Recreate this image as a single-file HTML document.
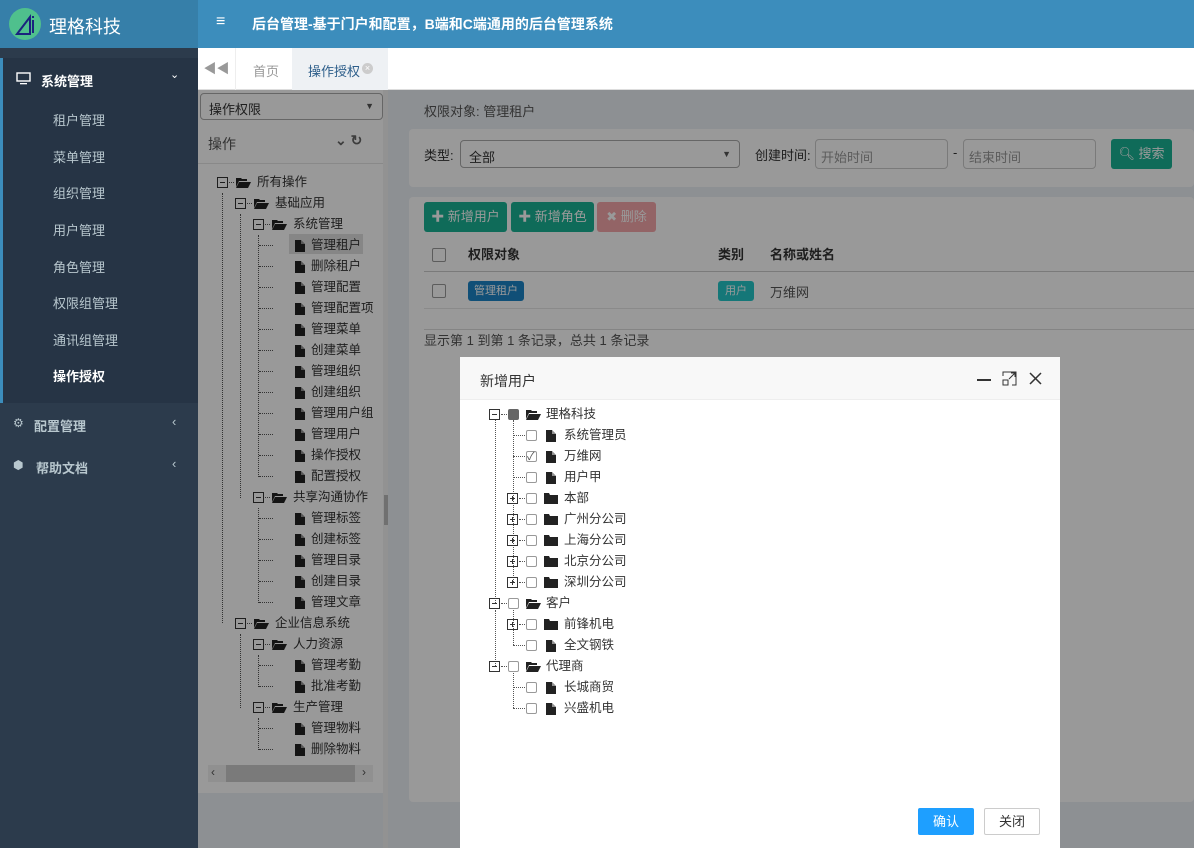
<!DOCTYPE html>
<html><head><meta charset="utf-8"><style>
*{box-sizing:border-box;margin:0;padding:0}
body{width:1194px;height:848px;overflow:hidden;position:relative;font-family:"Liberation Sans","Noto Sans CJK SC",sans-serif;font-size:13px;color:#333;background:#ecf0f5}
.abs{position:absolute}
#logo{left:0;top:0;width:198px;height:48px;background:#367fa9;color:#fff}
#top{left:198px;top:0;width:996px;height:48px;background:#3c8dbc;color:#fff;font-weight:bold;font-size:14px}
#side{left:0;top:48px;width:198px;height:800px;background:#2c3b4c;color:#b8c7ce}
.sub{color:#b8c7ce;font-size:13px;position:absolute;left:53px}
#tabs{left:198px;top:48px;width:996px;height:42px;background:#fff;border-bottom:1px solid #ddd}
.tr{position:absolute;font-size:12.5px;color:#333;white-space:nowrap;height:21px;line-height:21px}
.fold{display:inline-block;border:1px solid #333;position:absolute;width:11px;height:11px;top:5px}
.fold:after{content:"";position:absolute;left:2px;top:4px;width:5px;height:1px;background:#333}
.plus:before{content:"";position:absolute;left:4px;top:2px;width:1px;height:5px;background:#333}
.vl{position:absolute;border-left:1px dotted #555;width:0}
.hl{position:absolute;border-top:1px dotted #555;height:0}
.cb{position:absolute;width:11px;height:11px;border:1px solid #999;border-radius:2px;top:5px;background:#fff}
.btn{position:absolute;color:#fff;font-size:13px;text-align:center;border-radius:3px}
</style></head><body>
<div id="logo" class="abs">
 <svg class="abs" style="left:6px;top:5px" width="36" height="36" viewBox="0 0 36 36"><circle cx="19" cy="19" r="16" fill="#4fc08d"/><path d="M11 29 L24 12 L24 29 Z" fill="none" stroke="#1a237e" stroke-width="2"/><rect x="26" y="15" width="2" height="13" fill="#1a237e"/><rect x="26" y="11" width="2" height="2" fill="#1a237e"/></svg>
 <div class="abs" style="left:49px;top:13px;font-size:18px">理格科技</div>
</div>
<div id="top" class="abs">
 <div class="abs" style="left:18px;top:13px;font-size:16px">≡</div>
 <div class="abs" style="left:54px;top:14px">后台管理-基于门户和配置，B端和C端通用的后台管理系统</div>
</div>
<div id="side" class="abs">
 <div class="abs" style="left:0;top:10px;width:198px;height:345px;background:#263445;border-left:3px solid #3c8dbc"></div>
 <svg class="abs" style="left:16px;top:24px" width="15" height="13" viewBox="0 0 15 13"><rect x="1" y="1" width="13" height="8" fill="none" stroke="#fff" stroke-width="1.4"/><rect x="4" y="11" width="7" height="1.3" fill="#fff"/></svg>
 <div class="abs" style="left:41px;top:23px;color:#fff;font-weight:bold">系统管理</div>
 <div class="abs" style="left:170px;top:20px;color:#fff;font-size:11px">⌄</div>
 <div class="sub" style="top:62px">租户管理</div>
 <div class="sub" style="top:99px">菜单管理</div>
 <div class="sub" style="top:135px">组织管理</div>
 <div class="sub" style="top:172px">用户管理</div>
 <div class="sub" style="top:209px">角色管理</div>
 <div class="sub" style="top:245px">权限组管理</div>
 <div class="sub" style="top:282px">通讯组管理</div>
 <div class="sub" style="top:318px;color:#fff;font-weight:bold">操作授权</div>
 <div class="abs" style="left:13px;top:368px;font-size:12px">⚙</div>
 <div class="abs" style="left:34px;top:368px;font-weight:bold">配置管理</div>
 <div class="abs" style="left:172px;top:366px">‹</div>
 <div class="abs" style="left:13px;top:410px;font-size:12px">⬢</div>
 <div class="abs" style="left:36px;top:410px;font-weight:bold">帮助文档</div>
 <div class="abs" style="left:172px;top:408px">‹</div>
</div>
<div id="tabs" class="abs">
 <div class="abs" style="left:0;top:0;width:38px;height:42px;border-right:1px solid #eee;color:#999;text-align:center;line-height:42px;font-size:13px">◀◀</div>
 <div class="abs" style="left:55px;top:13px;color:#999">首页</div>
 <div class="abs" style="left:94px;top:0;width:96px;height:42px;background:#eef1f4"></div>
 <div class="abs" style="left:110px;top:13px;color:#2d5e8a">操作授权</div>
 <div class="abs" style="left:164px;top:15px;width:11px;height:11px;border-radius:50%;background:#ccc;color:#fff;font-size:9px;line-height:11px;text-align:center">×</div>
</div>
<div class="abs" style="left:198px;top:90px;width:185px;height:703px;background:#fff"></div>
<div class="abs" style="left:383px;top:90px;width:5px;height:758px;background:#f4f4f4"></div>
<div class="abs" style="left:384px;top:495px;width:4px;height:30px;background:#bbb"></div>
<div class="abs" style="left:200px;top:93px;width:183px;height:27px;border:1px solid #aaa;border-radius:4px;background:#fff;padding:5px 8px">操作权限<span style="float:right;font-size:9px;color:#555;margin-top:2px">▼</span></div>
<div class="abs" style="left:208px;top:134px;font-size:14px;color:#555">操作</div>
<div class="abs" style="left:335px;top:132px;color:#666;font-size:14px;font-weight:bold">⌄ ↻</div>
<div class="abs" style="left:198px;top:163px;width:185px;height:1px;background:#e5e5e5"></div>
<div class="abs" style="left:208px;top:765px;width:165px;height:17px;background:#f0f0f0"></div>
<div class="abs" style="left:226px;top:765px;width:129px;height:17px;background:#ccc"></div>
<div class="abs" style="left:211px;top:765px;font-size:12px;color:#555">‹</div>
<div class="abs" style="left:362px;top:765px;font-size:12px;color:#555">›</div>
<div id="lt"></div>
<div class="abs" style="left:424px;top:101px;color:#555">权限对象: 管理租户</div>
<div class="abs" style="left:409px;top:129px;width:785px;height:58px;background:#fff;border-radius:4px"></div>
<div class="abs" style="left:424px;top:145px">类型:</div>
<div class="abs" style="left:460px;top:140px;width:280px;height:28px;border:1px solid #aaa;border-radius:4px;background:#fff;padding:6px 8px">全部<span style="float:right;font-size:9px;color:#555;margin-top:2px">▼</span></div>
<div class="abs" style="left:755px;top:145px">创建时间:</div>
<div class="abs" style="left:815px;top:139px;width:133px;height:30px;border:1px solid #ccc;border-radius:4px;background:#fff;padding:7px 5px;color:#999">开始时间</div>
<div class="abs" style="left:953px;top:145px">-</div>
<div class="abs" style="left:963px;top:139px;width:133px;height:30px;border:1px solid #ccc;border-radius:4px;background:#fff;padding:7px 5px;color:#999">结束时间</div>
<div class="btn" style="left:1111px;top:139px;width:61px;height:30px;line-height:30px;background:#1ab394">🔍︎ 搜索</div>
<div class="abs" style="left:409px;top:197px;width:785px;height:605px;background:#fff;border-radius:4px"></div>
<div class="btn" style="left:424px;top:202px;width:83px;height:30px;line-height:30px;background:#1ab394">✚ 新增用户</div>
<div class="btn" style="left:511px;top:202px;width:83px;height:30px;line-height:30px;background:#1ab394">✚ 新增角色</div>
<div class="btn" style="left:597px;top:202px;width:59px;height:30px;line-height:30px;background:#f5a7aa">✖ 删除</div>
<div class="abs" style="left:432px;top:248px;width:14px;height:14px;border:1px solid #999;border-radius:2px;background:#fff"></div>
<div class="abs" style="left:468px;top:244px;font-weight:bold">权限对象</div>
<div class="abs" style="left:718px;top:244px;font-weight:bold">类别</div>
<div class="abs" style="left:770px;top:244px;font-weight:bold">名称或姓名</div>
<div class="abs" style="left:424px;top:271px;width:770px;height:1px;background:#ccc"></div>
<div class="abs" style="left:432px;top:284px;width:14px;height:14px;border:1px solid #999;border-radius:2px;background:#fff"></div>
<div class="btn" style="left:468px;top:281px;width:56px;height:20px;line-height:20px;font-size:11px;background:#1c84c6">管理租户</div>
<div class="btn" style="left:718px;top:281px;width:36px;height:20px;line-height:20px;font-size:11px;background:#23c6c8">用户</div>
<div class="abs" style="left:770px;top:282px;color:#555">万维网</div>
<div class="abs" style="left:424px;top:308px;width:770px;height:1px;background:#e7e7e7"></div>
<div class="abs" style="left:424px;top:329px;width:770px;height:1px;background:#ddd"></div>
<div class="abs" style="left:424px;top:330px;color:#555">显示第 1 到第 1 条记录，总共 1 条记录</div>
<div class="abs" style="left:198px;top:90px;width:996px;height:758px;background:rgba(0,0,0,0.4)"></div>
<div class="abs" style="left:460px;top:357px;width:600px;height:491px;background:#fff"></div>
<div class="abs" style="left:460px;top:357px;width:600px;height:43px;background:#f8f8f8;border-bottom:1px solid #eee"></div>
<div class="abs" style="left:480px;top:371px;font-size:14px">新增用户</div>
<div class="abs" style="left:977px;top:379px;width:14px;height:2px;background:#333"></div>
<svg class="abs" style="left:1002px;top:371px" width="15" height="15" viewBox="0 0 15 15" fill="none" stroke="#333"><path d="M1 5V1h13v13h-4M1 9h5v5H1z M7 8l6-6M9 2h4v4"/></svg>
<svg class="abs" style="left:1029px;top:372px" width="13" height="13" viewBox="0 0 13 13" stroke="#333" stroke-width="1.5"><path d="M1 1l11 11M12 1L1 12"/></svg>
<div id="dt"></div>
<div class="btn" style="left:918px;top:808px;width:56px;height:27px;line-height:27px;background:#1e9fff;border-radius:2px">确认</div>
<div class="abs" style="left:984px;top:808px;width:56px;height:27px;line-height:25px;border:1px solid #ccc;border-radius:2px;text-align:center">关闭</div>
<script>
function fileIcon(x,y){return `<svg class="abs" style="left:${x}px;top:${y}px" width="10" height="12" viewBox="0 0 10 12"><path d="M0 0h6l4 4v8H0z" fill="#222"/><path d="M6 0v4h4" fill="#fff" opacity=".5"/></svg>`}
function openF(x,y){return `<svg class="abs" style="left:${x}px;top:${y}px" width="15" height="11" viewBox="0 0 15 11"><path d="M0 1h5l1 1h5v2H3L0 10z M3 5h12l-3 6H0z" fill="#222"/></svg>`}
function closedF(x,y){return `<svg class="abs" style="left:${x}px;top:${y}px" width="14" height="11" viewBox="0 0 14 11"><path d="M0 0h5l1 2h8v9H0z" fill="#222"/></svg>`}
var L=[[0,'o','所有操作'],[1,'o','基础应用'],[2,'o','系统管理'],[3,'f','管理租户'],[3,'f','删除租户'],[3,'f','管理配置'],[3,'f','管理配置项'],[3,'f','管理菜单'],[3,'f','创建菜单'],[3,'f','管理组织'],[3,'f','创建组织'],[3,'f','管理用户组'],[3,'f','管理用户'],[3,'f','操作授权'],[3,'f','配置授权'],[2,'o','共享沟通协作'],[3,'f','管理标签'],[3,'f','创建标签'],[3,'f','管理目录'],[3,'f','创建目录'],[3,'f','管理文章'],[1,'o','企业信息系统'],[2,'o','人力资源'],[3,'f','管理考勤'],[3,'f','批准考勤'],[2,'o','生产管理'],[3,'f','管理物料'],[3,'f','删除物料']];
var h='';
h+=`<div class="vl" style="left:222px;top:193px;height:430px"></div>`;
h+=`<div class="vl" style="left:240px;top:214px;height:284px"></div><div class="vl" style="left:240px;top:634px;height:74px"></div>`;
h+=`<div class="vl" style="left:258px;top:235px;height:242px"></div><div class="vl" style="left:258px;top:508px;height:95px"></div><div class="vl" style="left:258px;top:655px;height:32px"></div><div class="vl" style="left:258px;top:718px;height:32px"></div>`;
h+=`<div class="abs" style="left:289px;top:234px;width:74px;height:20px;background:#e0e0e0"></div>`;
L.forEach((r,i)=>{var y=172+i*21,x=217+r[0]*18;
 if(r[1]=='o'){h+=`<div class="tr" style="left:${x}px;top:${y}px"><span class="fold"></span></div><div class="hl" style="left:${x+12}px;top:${y+10}px;width:5px"></div>`+openF(x+19,y+5)+`<div class="tr" style="left:${x+40}px;top:${y}px">${r[2]}</div>`}
 else{h+=`<div class="hl" style="left:${x-12}px;top:${y+10}px;width:14px"></div>`+fileIcon(x+24,y+5)+`<div class="tr" style="left:${x+40}px;top:${y}px">${r[2]}</div>`}
});
document.getElementById('lt').innerHTML=h;
var D=[[0,'o','理格科技','g'],[1,'f','系统管理员'],[1,'f','万维网','c'],[1,'f','用户甲'],[1,'p','本部'],[1,'p','广州分公司'],[1,'p','上海分公司'],[1,'p','北京分公司'],[1,'p','深圳分公司'],[0,'o','客户'],[1,'p','前锋机电'],[1,'f','全文钢铁'],[0,'o','代理商'],[1,'f','长城商贸'],[1,'f','兴盛机电']];
h=`<div class="vl" style="left:495px;top:420px;height:183px"></div><div class="vl" style="left:495px;top:610px;height:56px"></div><div class="vl" style="left:513px;top:420px;height:162px"></div><div class="vl" style="left:513px;top:610px;height:35px"></div><div class="vl" style="left:513px;top:673px;height:35px"></div>`;
D.forEach((r,i)=>{var y=404+i*21,x=489+r[0]*18;
 var cbx=x+19;
 if(r[1]=='o'||r[1]=='p'){h+=`<div class="tr" style="left:${x}px;top:${y}px"><span class="fold ${r[1]=='p'?'plus':''}"></span></div><div class="hl" style="left:${x+12}px;top:${y+10}px;width:6px"></div>`}
 else{h+=`<div class="hl" style="left:${x+6}px;top:${y+10}px;width:12px"></div>`}
 var st=r[3]=='g'?'background:#666;border-color:#666':'';
 h+=`<div class="cb" style="left:${cbx}px;top:${y+5}px;${st}">${r[3]=='c'?'<span style="position:absolute;left:0;top:-4px;font-size:11px;color:#555">✓</span>':''}</div>`;
 if(r[1]=='o')h+=openF(cbx+18,y+5);else if(r[1]=='p')h+=closedF(cbx+18,y+5);else h+=fileIcon(cbx+20,y+5);
 h+=`<div class="tr" style="left:${cbx+38}px;top:${y}px">${r[2]}</div>`;
});
document.getElementById('dt').innerHTML=h;
</script>
</body></html>
